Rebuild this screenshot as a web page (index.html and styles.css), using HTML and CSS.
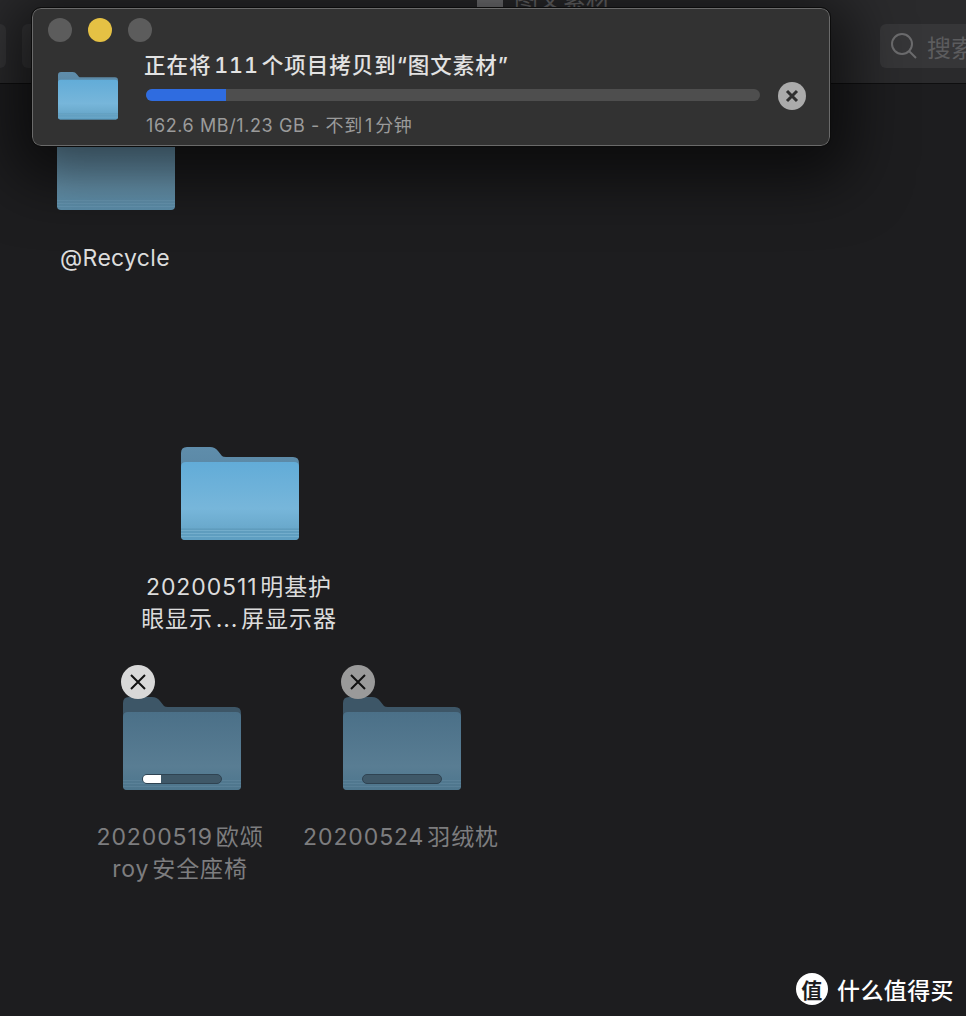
FILE: index.html
```html
<!DOCTYPE html>
<html lang="zh-CN">

<head>
    <meta charset="UTF-8">
    <title>图文素材</title>
    <link rel="stylesheet" href="styles.css">
</head>
<body>

  <svg class="defs" width="0" height="0">
    <defs>
      <linearGradient id="backBright" x1="0" y1="0" x2="0" y2="1">
        <stop offset="0" stop-color="#5f8dab"/>
        <stop offset="1" stop-color="#4d7a96"/>
      </linearGradient>
      <linearGradient id="frontBright" x1="0" y1="0" x2="0" y2="1">
        <stop offset="0" stop-color="#62acd8"/>
        <stop offset="0.6" stop-color="#77b6da"/>
        <stop offset="0.84" stop-color="#6aa9cc"/>
        <stop offset="0.86" stop-color="#5f9cbd"/>
        <stop offset="1" stop-color="#5f9fc2"/>
      </linearGradient>
      <linearGradient id="frontDim" x1="0" y1="0" x2="0" y2="1">
        <stop offset="0" stop-color="#4b7088"/>
        <stop offset="0.7" stop-color="#597d93"/>
        <stop offset="0.86" stop-color="#527990"/>
        <stop offset="1" stop-color="#4e768d"/>
      </linearGradient>
      <linearGradient id="frontShaded" x1="0" y1="0" x2="0" y2="1">
        <stop offset="0.3" stop-color="#74a4c0"/>
        <stop offset="0.7" stop-color="#6f9fba"/>
        <stop offset="1" stop-color="#5f93b0"/>
      </linearGradient>
      <symbol id="folderBright" viewBox="0 0 118 94">
        <path d="M0 6q0-6 6-6h23q5 0 8 4l4 5q1 1 4 1h67q6 0 6 6v73q0 4-4 4H4q-4 0-4-4z" fill="url(#backBright)"/>
        <path d="M0 20q0-5 5-5h108q5 0 5 5v69q0 4-4 4H4q-4 0-4-4z" fill="url(#frontBright)"/>
        <path d="M0 83.500h118M0 86.500h118M0 89.500h118" stroke="#8cc0dc" stroke-opacity=".45" fill="none"/>
      </symbol>
      <symbol id="folderDim" viewBox="0 0 118 94">
        <path d="M0 6q0-6 6-6h23q5 0 8 4l4 5q1 1 4 1h67q6 0 6 6v73q0 4-4 4H4q-4 0-4-4z" fill="#3d5667"/>
        <path d="M0 20q0-5 5-5h108q5 0 5 5v69q0 4-4 4H4q-4 0-4-4z" fill="url(#frontDim)"/>
        <path d="M0 83.500h118M0 86.500h118M0 89.500h118" stroke="#6d93a8" stroke-opacity=".35" fill="none"/>
      </symbol>
      <symbol id="folderShaded" viewBox="0 0 118 94">
        <path d="M0 20q0-5 5-5h108q5 0 5 5v69q0 4-4 4H4q-4 0-4-4z" fill="url(#frontShaded)"/>
        <path d="M0 83.500h118M0 86.500h118M0 89.500h118" stroke="#7fb0cc" stroke-opacity=".35" fill="none"/>
      </symbol>
    </defs>
  </svg>

  <div class="finder">
    <div class="toolbar">
      <div class="tool-btn tool-btn-a"></div>
      <div class="tool-btn tool-btn-b"></div>
      <div class="window-title">
        <span class="title-icon"></span>
        <span>图文素材</span>
      </div>
      <div class="search">
        <svg width="28" height="28" viewBox="0 0 28 28" fill="none" stroke="#6c6c6e" stroke-width="2">
          <circle cx="12" cy="12" r="10"/>
          <path d="M19 19l7 7"/>
        </svg>
        <span>搜索</span>
      </div>
    </div>

    <div class="canvas">
      <!-- icon view, items sit where finder put them -->
      <div class="item item-recycle">
        <svg class="folder" viewBox="0 0 118 94"><use href="#folderShaded"/></svg>
        <div class="name">@Recycle</div>
      </div>

      <div class="item item-monitor">
        <svg class="folder" viewBox="0 0 118 94"><use href="#folderBright"/></svg>
        <div class="name">20200511明基护<br>眼显示...屏显示器</div>
      </div>

      <div class="item item-seat copying">
        <svg class="folder" viewBox="0 0 118 94"><use href="#folderDim"/></svg>
        <div class="stop stop-light"><svg width="20" height="20" viewBox="0 0 20 20"><path d="M3 3l14 14M17 3L3 17"/></svg></div>
        <div class="mini-bar"><div class="mini-fill" style="width:18px"></div></div>
        <div class="name">20200519欧颂<br>roy安全座椅</div>
      </div>

      <div class="item item-pillow copying">
        <svg class="folder" viewBox="0 0 118 94"><use href="#folderDim"/></svg>
        <div class="stop stop-dark"><svg width="20" height="20" viewBox="0 0 20 20"><path d="M3 3l14 14M17 3L3 17"/></svg></div>
        <div class="mini-bar"></div>
        <div class="name">20200524羽绒枕</div>
      </div>
    </div>
  </div>

  <div class="copy-dialog">
    <div class="lights">
      <span class="light"></span>
      <span class="light light-yellow"></span>
      <span class="light"></span>
    </div>
    <div class="copy-row">
      <svg class="copy-folder" viewBox="0 0 118 94"><use href="#folderBright"/></svg>
      <div class="copy-info">
        <div class="copy-title">正在将111个项目拷贝到“图文素材”</div>
        <div class="progress"><div class="progress-fill" style="width:13%"></div></div>
        <div class="copy-status">162.6 MB/1.23 GB - 不到1分钟</div>
      </div>
      <div class="cancel">
        <svg width="14" height="14" viewBox="0 0 14 14"><path d="M2 2l10 10M12 2L2 12"/></svg>
      </div>
    </div>
  </div>

  <div class="watermark">
    <div class="wm-badge">值</div>
    <span>什么值得买</span>
  </div>

</body>
</html>
```

FILE: styles.css
```css
* {
    box-sizing: border-box;
}

html, body {
    margin: 0;
    height: 100%;
}

body {
    position: relative;
    width: 966px;
    height: 1016px;
    overflow: hidden;
    background-color: #1d1d1f;
    font-family: "Inter", "Noto Sans CJK SC", sans-serif;
    text-autospace: normal;
}

.defs {
    position: absolute;
}

.finder {
    display: flex;
    flex-direction: column;
    height: 100%;
}

.toolbar {
    position: relative;
    height: 84px;
    flex-shrink: 0;
    background-color: #2a2a2c;
    border-bottom: 1px solid #0e0e0f;
}

.tool-btn {
    position: absolute;
    top: 24px;
    height: 44px;
    background-color: #363638;
    border-radius: 6px;
}

.tool-btn-a {
    left: -20px;
    width: 26px;
}

.tool-btn-b {
    left: 22px;
    width: 30px;
}

.window-title {
    position: absolute;
    left: 477px;
    top: -15px;
    display: flex;
    align-items: center;
    gap: 11px;
    font-size: 24px;
    line-height: 30px;
    color: #6c6c6e;
}

.title-icon {
    width: 26px;
    height: 22px;
    background-color: #77777a;
}

.search {
    position: absolute;
    left: 880px;
    top: 24px;
    width: 110px;
    height: 44px;
    display: flex;
    align-items: center;
    gap: 9px;
    padding-left: 10px;
    background-color: #363638;
    border-radius: 6px;
    font-size: 24px;
    color: #5c5c5e;
}

.canvas {
    position: relative;
    flex: 1;
    background-color: #1d1d1f;
}

.item {
    position: absolute;
    text-align: center;
}

.folder {
    display: block;
    width: 118px;
    height: 94px;
}

.name {
    position: absolute;
    left: 50%;
    top: 124px;
    margin-left: -1px;
    transform: translateX(-50%);
    white-space: nowrap;
    font-size: 23px;
    line-height: 32px;
    letter-spacing: 0.9px;
    color: #dcdcdc;
}

.copying .name {
    color: #7d7d7f;
}

.item-recycle {
    left: 57px;
    top: 33px;
}

.item-recycle .name {
    left: 59px;
    top: 125px;
    letter-spacing: 0.3px;
}

.item-monitor {
    left: 181px;
    top: 363px;
}

.item-seat {
    left: 123px;
    top: 613px;
}

.item-seat .name {
    margin-left: -2px;
}

.item-pillow {
    left: 343px;
    top: 613px;
}

.stop {
    position: absolute;
    left: -2px;
    top: -32px;
    width: 34px;
    height: 34px;
    border-radius: 50%;
    display: flex;
    align-items: center;
    justify-content: center;
}

.stop path {
    stroke: #111;
    stroke-width: 2;
    fill: none;
}

.stop-light {
    background-color: #d8d8d8;
}

.stop-dark {
    background-color: #9a9a9a;
}

.mini-bar {
    position: absolute;
    left: 19px;
    top: 77px;
    width: 80px;
    height: 10px;
    background-color: #3f5868;
    border: 1px solid #2f4352;
    border-radius: 5px;
    overflow: hidden;
}

.mini-fill {
    height: 100%;
    background-color: #fff;
}

.copy-dialog {
    position: absolute;
    left: 32px;
    top: 8px;
    width: 798px;
    height: 138px;
    background-color: #323232;
    border: 1px solid #6a6a6a;
    border-radius: 9px;
    outline: 1px solid #0c0c0c;
    box-shadow: 0 14px 60px 20px rgba(0, 0, 0, 0.6);
    padding: 9px 15px;
}

.lights {
    display: flex;
    gap: 16px;
}

.light {
    width: 24px;
    height: 24px;
    border-radius: 50%;
    background-color: #5c5c5c;
}

.light-yellow {
    background-color: #e5c144;
}

.copy-row {
    display: flex;
    align-items: flex-start;
}

.copy-folder {
    width: 60px;
    height: 48px;
    margin: 30px 0 0 10px;
    flex-shrink: 0;
}

.copy-info {
    width: 614px;
    margin: 8px 0 0 28px;
}

.copy-title {
    margin-top: -1px;
    margin-left: -2px;
    font-size: 21.5px;
    font-weight: 500;
    font-variant-numeric: tabular-nums;
    line-height: 32px;
    letter-spacing: 1px;
    color: #e2e2e2;
    white-space: nowrap;
}

.progress {
    height: 12px;
    margin-top: 8px;
    background-color: #4e4e4e;
    border-radius: 6px;
    overflow: hidden;
}

.progress-fill {
    height: 100%;
    background-color: #2f6ce0;
}

.copy-status {
    margin-top: 13px;
    font-size: 18px;
    line-height: 24px;
    letter-spacing: 0.6px;
    color: #9b9b9b;
    white-space: nowrap;
}

.cancel {
    width: 28px;
    height: 28px;
    margin: 40px 0 0 18px;
    border-radius: 50%;
    background-color: #ababab;
    display: flex;
    align-items: center;
    justify-content: center;
    flex-shrink: 0;
}

.cancel path {
    stroke: #2e2e2e;
    stroke-width: 3;
    fill: none;
}

.watermark {
    position: absolute;
    left: 796px;
    top: 972px;
    display: flex;
    align-items: center;
    gap: 9px;
    font-size: 23px;
    font-weight: 500;
    letter-spacing: 0.4px;
    color: #fff;
}

.wm-badge {
    width: 32px;
    height: 32px;
    border-radius: 50%;
    background-color: #fff;
    color: #1d1d1f;
    font-family: "Noto Sans CJK SC", sans-serif;
    font-weight: 700;
    font-size: 21px;
    line-height: 32px;
    text-align: center;
}
```
